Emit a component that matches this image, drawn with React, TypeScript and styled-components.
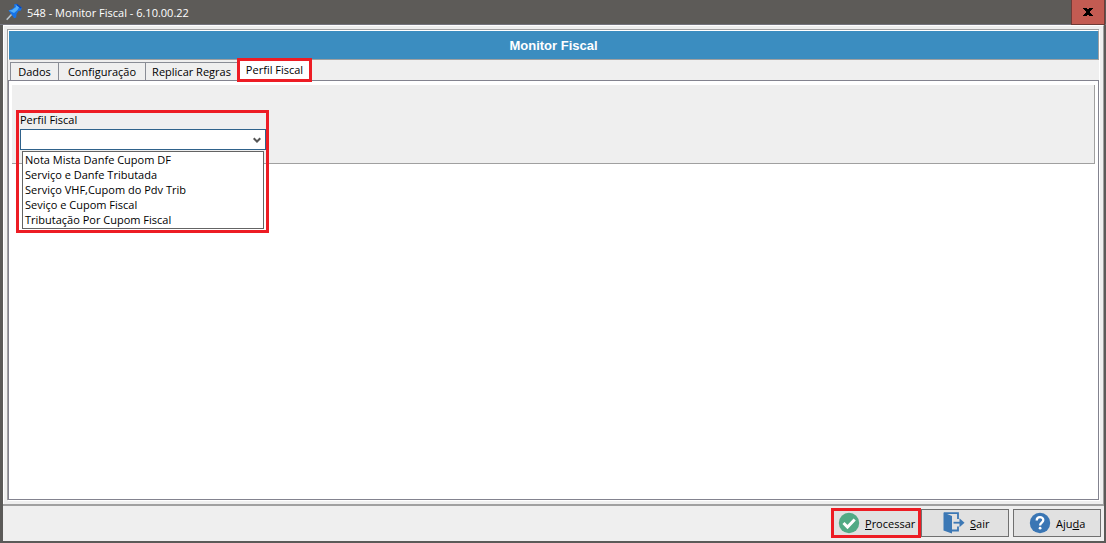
import React, { useState } from "react";
import styled, { createGlobalStyle, css } from "styled-components";

const red = "#ed1c24";

const GlobalStyle = createGlobalStyle`
  * { box-sizing: border-box; }
  body {
    margin: 0;
    background: #efefef;
    color: #000;
    font: 11px/15px "Open Sans", "Noto Sans", sans-serif;
  }
  button, select { font: inherit; color: inherit; }
`;

const highlight = css`
  &::after {
    content: "";
    position: absolute;
    inset: 0;
    border: 3px solid ${red};
    pointer-events: none;
  }
`;

const Window = styled.div`
  display: flex;
  flex-direction: column;
  min-height: 100vh;
  border: solid #5b5a58;
  border-width: 0 2px 2px 3px;
  background: #efefef;
`;

const TitleBar = styled.header`
  display: flex;
  align-items: center;
  height: 25px;
  margin: 0 -2px 0 -3px;
  padding-left: 6px;
  gap: 5px;
  background: #5d5b58;
  border-bottom: 1px solid #75757e;
`;

const Title = styled.h1`
  flex: 1;
  margin: 0;
  color: #fff;
  font-size: 11px;
  font-weight: 400;
  line-height: 15px;
`;

const CloseButton = styled.button`
  display: flex;
  align-items: center;
  justify-content: center;
  width: 34px;
  height: 25px;
  margin-right: 1px;
  padding: 0;
  border: 1px solid #6e3b37;
  border-top: 0;
  background: #c35b52;
`;

const Main = styled.main`
  flex: 1;
  display: flex;
  flex-direction: column;
  padding: 3px 4px 4px 3px;
  border: solid #fff;
  border-width: 1px 0 0 1px;
  border-right: 1px solid #a0a0a0;
`;

const Frame = styled.div`
  flex: 1;
  display: flex;
  flex-direction: column;
  border: 1px solid #a0a0a0;
  border-width: 1px 0 0 1px;
  box-shadow: 1px 1px 0 #fff;
`;

const Banner = styled.h2`
  margin: 0;
  height: 30px;
  border: solid #fff;
  border-width: 1px 0 0 1px;
  border-right: 1px solid #a0a0a0;
  box-shadow: inset 0 -1px 0 #a0a0a0;
  background: #3b8dc0;
  color: #fff;
  font: 700 13px/30px "Liberation Sans", Arial, sans-serif;
  text-align: center;
`;

const TabStrip = styled.div`
  display: flex;
  align-items: flex-end;
  height: 20px;
  padding-left: 2px;
`;

const Tab = styled.button<{ $width: number; $active?: boolean }>`
  position: relative;
  width: ${(p) => p.$width}px;
  height: 18px;
  padding: 0;
  border: solid #898c95;
  border-width: 1px 1px 0 1px;
  background: ${(p) => (p.$active ? "#fff" : "#efefef")};
  line-height: 17px;
  white-space: nowrap;
  & + & { border-left: 0; }
  ${(p) =>
    p.$active &&
    css`
      z-index: 1;
      height: 24px;
      margin: 0 0 -2px -1px;
      padding-bottom: 1px;
      border: 0;
      ${highlight}
    `}
`;

const Page = styled.section`
  flex: 1;
  padding: 4px 3px;
  border: 1px solid #83838f;
  background: #fff;
`;

const FilterPanel = styled.div`
  height: 79px;
  padding: 25px 4px 0;
  border: solid #a0a0a0;
  border-width: 0 1px 1px 0;
  background: #efefef;
`;

const Field = styled.div`
  position: relative;
  width: 253px;
  height: 123px;
  padding: 2px 3px 0 4px;
  ${highlight}
`;

const Label = styled.label`
  display: block;
  height: 17px;
`;

const SelectBox = styled.div`
  position: relative;
  svg {
    position: absolute;
    right: 5px;
    top: 8px;
    pointer-events: none;
  }
`;

const Select = styled.select`
  display: block;
  width: 100%;
  height: 21px;
  padding: 0 20px 0 4px;
  appearance: none;
  border: 1px solid #2f628b;
  border-radius: 0;
  background: #fff;
  outline: 0;
`;

const Options = styled.ul`
  margin: 1px 2px 0;
  padding: 0 2px 1px;
  list-style: none;
  border: 1px solid #646464;
  background: #fff;
`;

const Option = styled.li`
  height: 15px;
  white-space: nowrap;
`;

const Footer = styled.footer`
  display: flex;
  justify-content: flex-end;
  height: 37px;
  padding: 3px 3px 0 0;
  border-top: 2px solid #a0a0a0;
`;

const ActionButton = styled.button<{ $gap?: boolean; $marked?: boolean }>`
  position: relative;
  display: flex;
  align-items: center;
  gap: 5px;
  width: 88px;
  height: 28px;
  margin-left: ${(p) => (p.$gap ? 4 : 0)}px;
  padding: 0 0 0 ${(p) => (p.$gap ? 15 : 21)}px;
  border: 1px solid #707070;
  background: #e1e1e1;
  ${(p) =>
    p.$marked &&
    css`
      width: 90px;
      height: 30px;
      margin-top: -1px;
      padding-left: 7px;
      border: 0;
      ${highlight}
    `}
`;

const PinIcon = () => (
  <svg width="16" height="18" viewBox="0 0 16 18" aria-hidden="true">
    <path d="M6 11 .7 16.800" stroke="#b9c4cc" strokeWidth="1.600" />
    <path d="M2.500 7.500 6 6 8.500 4 8 1.500 10.500.8l5.300 4-.8 2.700-2.500.5-2 3-.3 3.500-2 .8z" fill="#1673e8" />
    <path d="m3 7.500 3-.5 4-3-.3-2 1.300-.5 2.500 2-2 3.500-3.500 3z" fill="#54aefa" />
    <path d="m10.500 1.300 4.700 3.700" stroke="#0646bc" strokeWidth="1.500" />
  </svg>
);

const CloseIcon = () => (
  <svg width="10" height="8" viewBox="0 0 10 8" aria-hidden="true">
    <path d="M0 0h4v1h2V0h4v1H9v1H8v1H7v2h1v1h1v1h1v1H6V7H4v1H0V7h1V6h1V5h1V3H2V2H1V1H0z" fill="#000" />
  </svg>
);

const ChevronIcon = () => (
  <svg width="8" height="7" viewBox="0 0 8 7" aria-hidden="true">
    <path d="m.7 1.200 3.300 3.300 3.300-3.300" fill="none" stroke="#555" strokeWidth="2" />
  </svg>
);

const CheckIcon = () => (
  <svg width="22" height="22" viewBox="0 0 22 22" aria-hidden="true">
    <circle cx="11" cy="11" r="10.200" fill="#52aa85" />
    <path d="m5.500 11 4 4 7.200-7.500" fill="none" stroke="#fff" strokeWidth="3" />
  </svg>
);

const ExitIcon = () => (
  <svg width="22" height="22" viewBox="0 0 22 22" aria-hidden="true">
    <path d="M1 1.200h14V7M15 14.500v4H8" fill="none" stroke="#3c78b5" strokeWidth="1.800" />
    <path d="m.5.500 8.500 3.500v17.500L.5 18.500z" fill="#3c78b5" />
    <path d="M10.500 10.700h8" stroke="#3c78b5" strokeWidth="1.800" />
    <path d="M16.500 6.300 21.500 10.700l-5 4.500z" fill="#3c78b5" />
  </svg>
);

const HelpIcon = () => (
  <svg width="22" height="22" viewBox="0 0 22 22" aria-hidden="true">
    <circle cx="11" cy="11" r="10.200" fill="#3a76b4" />
    <path d="M7.700 8.500C7.700 4 14.300 4.200 14.300 8c0 2.500-3.200 2.700-3.200 5.500" fill="none" stroke="#fff" strokeWidth="2.300" />
    <circle cx="11.100" cy="16.200" r="1.400" fill="#fff" />
  </svg>
);

const tabs = [
  { name: "Dados", width: 49 },
  { name: "Configuração", width: 87 },
  { name: "Replicar Regras", width: 92 },
  { name: "Perfil Fiscal", width: 75 },
];

const profiles = [
  "Nota Mista Danfe Cupom DF",
  "Serviço e Danfe Tributada",
  "Serviço VHF,Cupom do Pdv Trib",
  "Seviço e Cupom Fiscal",
  "Tributação Por Cupom Fiscal",
];

export default function App() {
  const [profile, setProfile] = useState("");
  return (
    <>
      <GlobalStyle />
      <Window>
        <TitleBar>
          <PinIcon />
          <Title>548 - Monitor Fiscal - 6.10.00.22</Title>
          <CloseButton aria-label="Fechar"><CloseIcon /></CloseButton>
        </TitleBar>
        <Main>
          <Frame>
            <Banner>Monitor Fiscal</Banner>
            <TabStrip role="tablist">
              {tabs.map((t, i) => (
                <Tab key={t.name} role="tab" aria-selected={i === 3} $width={t.width} $active={i === 3}>
                  {t.name}
                </Tab>
              ))}
            </TabStrip>
            <Page role="tabpanel">
              <FilterPanel>
                <Field>
                  <Label htmlFor="perfil">Perfil Fiscal</Label>
                  <SelectBox>
                    <Select id="perfil" value={profile} onChange={(e) => setProfile(e.target.value)}>
                      <option value="" />
                      {profiles.map((p) => <option key={p}>{p}</option>)}
                    </Select>
                    <ChevronIcon />
                  </SelectBox>
                  <Options role="listbox" aria-label="Perfil Fiscal">
                    {profiles.map((p) => (
                      <Option key={p} role="option" aria-selected={p === profile} onClick={() => setProfile(p)}>
                        {p}
                      </Option>
                    ))}
                  </Options>
                </Field>
              </FilterPanel>
            </Page>
          </Frame>
        </Main>
        <Footer>
          <ActionButton $marked><CheckIcon /><span><u>P</u>rocessar</span></ActionButton>
          <ActionButton><ExitIcon /><span><u>S</u>air</span></ActionButton>
          <ActionButton $gap><HelpIcon /><span>Aju<u>d</u>a</span></ActionButton>
        </Footer>
      </Window>
    </>
  );
}
